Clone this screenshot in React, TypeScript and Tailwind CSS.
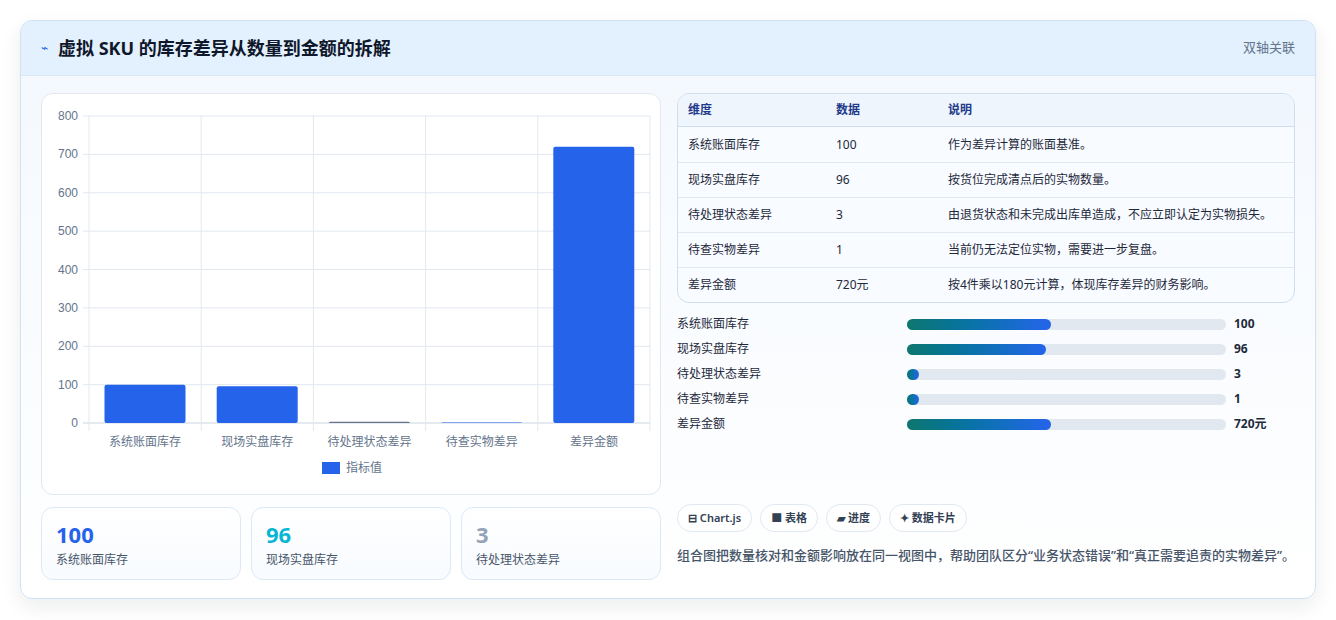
import React from "react";

const rows = [
  { k: "系统账面库存", v: "100", d: "作为差异计算的账面基准。" },
  { k: "现场实盘库存", v: "96", d: "按货位完成清点后的实物数量。" },
  { k: "待处理状态差异", v: "3", d: "由退货状态和未完成出库单造成，不应立即认定为实物损失。" },
  { k: "待查实物差异", v: "1", d: "当前仍无法定位实物，需要进一步复盘。" },
  { k: "差异金额", v: "720元", d: "按4件乘以180元计算，体现库存差异的财务影响。" },
];

const bars = [
  { k: "系统账面库存", v: "100", w: 144 },
  { k: "现场实盘库存", v: "96", w: 139 },
  { k: "待处理状态差异", v: "3", w: 12 },
  { k: "待查实物差异", v: "1", w: 12 },
  { k: "差异金额", v: "720元", w: 144 },
];

const Chart = () => {
  const x0 = 47, x1 = 608, y0 = 22, y1 = 329;
  const step = (y1 - y0) / 8;
  const cw = (x1 - x0) / 5;
  const vals = [100, 96, 3, 1, 720];
  const cats = ["系统账面库存", "现场实盘库存", "待处理状态差异", "待查实物差异", "差异金额"];
  return (
    <svg width="620" height="402" className="block" style={{ fontFamily: "'Liberation Sans','Noto Sans CJK SC',sans-serif" }}>
      {Array.from({ length: 9 }).map((_, i) => (
        <g key={i}>
          <line x1={x0 - 6} x2={x1} y1={y0 + i * step} y2={y0 + i * step} stroke={i === 8 ? "#cbd5e1" : "#e2e8f0"} />
          <text x={36} y={y0 + i * step + 4} textAnchor="end" fontSize="12" fill="#64748b">{800 - i * 100}</text>
        </g>
      ))}
      {Array.from({ length: 6 }).map((_, i) => (
        <line key={i} x1={x0 + i * cw} x2={x0 + i * cw} y1={y0} y2={y1 + 8} stroke="#e2e8f0" />
      ))}
      {vals.map((v, i) => {
        const h = (v / 800) * (y1 - y0);
        return (
          <g key={i}>
            <rect x={x0 + i * cw + 15.5} y={y1 - h} width={81} height={h} rx={2} fill={i === 2 ? "#64748b" : "#2563eb"} />
            <text x={x0 + i * cw + cw / 2} y={y1 + 23} textAnchor="middle" fontSize="12" fill="#64748b">{cats[i]}</text>
          </g>
        );
      })}
      <rect x={280} y={368} width={18} height={12} fill="#2563eb" />
      <text x={304} y={378} fontSize="12" fill="#64748b">指标值</text>
    </svg>
  );
};

export default function App() {
  return (
    <div className="w-[1336px] h-[620px] bg-white p-5 pb-0" style={{ fontFamily: "'Noto Sans','Noto Sans CJK SC',sans-serif" }}>
      <div className="h-[579px] rounded-xl border border-[#cfe3f5] bg-gradient-to-b from-[#f3f8fe] to-white shadow-[0_8px_20px_rgba(15,23,42,0.08)] overflow-hidden">
        <div className="h-[55px] bg-[#e3f0fd] border-b border-[#d6e7f8] flex items-center justify-between px-5">
          <div className="flex items-center gap-2.5">
            <span className="text-[#2563eb] text-xs">⌁</span>
            <h1 className="text-[18px] font-bold text-[#0f172a]">虚拟 SKU 的库存差异从数量到金额的拆解</h1>
          </div>
          <span className="text-[13px] text-[#64748b]">双轴关联</span>
        </div>
        <div className="flex gap-4 px-5 pt-[17px]">
          <div className="w-[620px] flex flex-col gap-3">
            <div className="h-[402px] rounded-xl border border-[#e2e8f0] bg-white"><Chart /></div>
            <div className="grid grid-cols-3 gap-2.5">
              {[
                { v: "100", c: "text-[#2563eb]", l: "系统账面库存" },
                { v: "96", c: "text-[#06b6d4]", l: "现场实盘库存" },
                { v: "3", c: "text-[#94a3b8]", l: "待处理状态差异" },
              ].map((s) => (
                <div key={s.l} className="h-[73px] rounded-xl border border-[#dbe8f5] bg-gradient-to-b from-white to-[#f8fbff] px-3.5 pt-2.5">
                  <div className={`text-[22px] font-bold leading-[32px] ${s.c}`}>{s.v}</div>
                  <div className="text-xs text-[#475569] mt-0.5">{s.l}</div>
                </div>
              ))}
            </div>
          </div>
          <div className="w-[620px] flex flex-col">
            <div className="rounded-xl border border-[#cfdff0] overflow-hidden bg-[#f8fbff] text-xs">
              <div className="flex h-[33px] items-center bg-[#eef5fd] border-b border-[#cfdff0] font-semibold text-[#1e3a8a]">
                <div className="w-[158px] pl-2.5">维度</div>
                <div className="w-[112px]">数据</div>
                <div>说明</div>
              </div>
              {rows.map((r, i) => (
                <div key={r.k} className={`flex h-[35px] items-center text-[#1e293b] ${i ? "border-t border-[#e2e8f0]" : ""}`}>
                  <div className="w-[158px] pl-2.5">{r.k}</div>
                  <div className="w-[112px]">{r.v}</div>
                  <div>{r.d}</div>
                </div>
              ))}
            </div>
            <div className="flex flex-col gap-[7px] mt-3 text-xs">
              {bars.map((b) => (
                <div key={b.k} className="flex items-center h-[18px]">
                  <div className="w-[230px] text-[#1e293b]">{b.k}</div>
                  <div className="w-[319px] h-[11px] rounded-full bg-[#e2e8f0]">
                    <div className="h-full rounded-full bg-gradient-to-r from-[#0f766e] to-[#2563eb]" style={{ width: b.w }} />
                  </div>
                  <div className="ml-2 font-bold text-[#1e293b]">{b.v}</div>
                </div>
              ))}
            </div>
            <div className="flex gap-2 mt-[71px]">
              {["⊟ Chart.js", "■ 表格", "▰ 进度", "✦ 数据卡片"].map((c) => (
                <span key={c} className="h-[28px] flex items-center px-2.5 rounded-full border border-[#e2e8f0] bg-white text-[11px] font-semibold text-[#334155]">{c}</span>
              ))}
            </div>
            <p className="mt-3 text-[13px] leading-[22px] font-medium text-[#475569]">组合图把数量核对和金额影响放在同一视图中，帮助团队区分“业务状态错误”和“真正需要追责的实物差异”。</p>
          </div>
        </div>
      </div>
    </div>
  );
}
